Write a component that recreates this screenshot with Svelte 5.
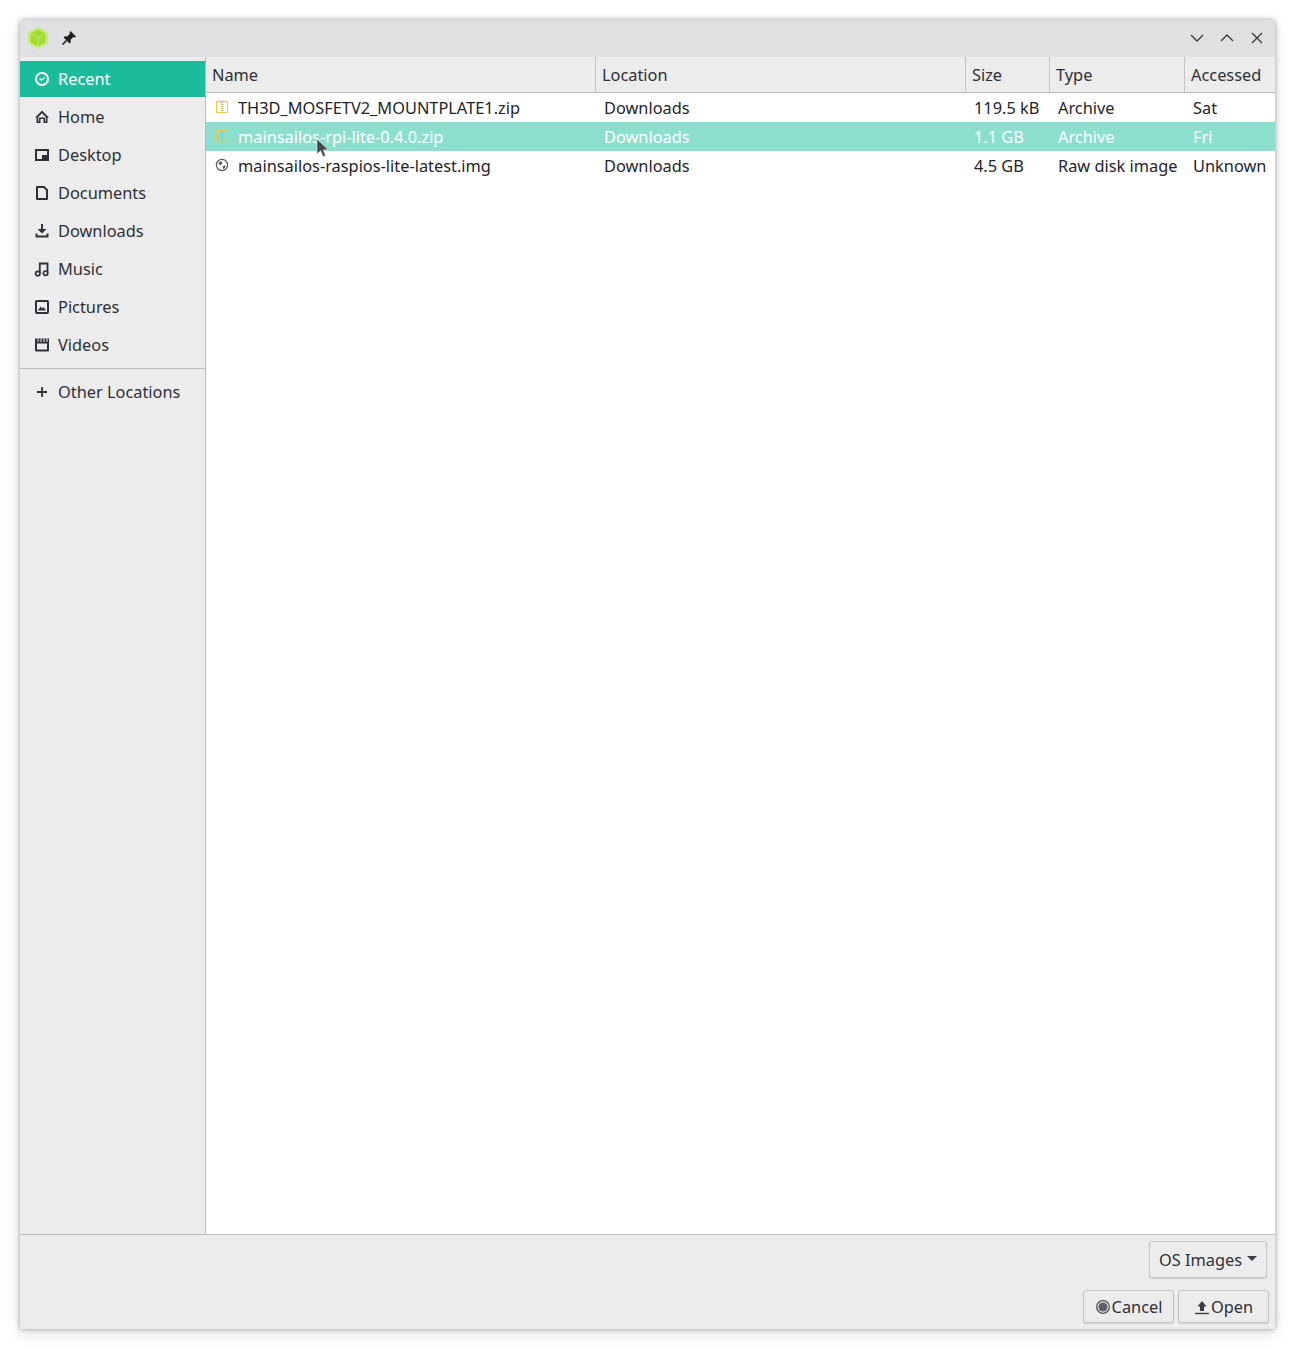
<script>
	const places = [
		{ name: 'Recent', icon: 'recent', active: true },
		{ name: 'Home', icon: 'home' },
		{ name: 'Desktop', icon: 'desktop' },
		{ name: 'Documents', icon: 'documents' },
		{ name: 'Downloads', icon: 'downloads' },
		{ name: 'Music', icon: 'music' },
		{ name: 'Pictures', icon: 'pictures' },
		{ name: 'Videos', icon: 'videos' }
	];

	const files = [
		{ name: 'TH3D_MOSFETV2_MOUNTPLATE1.zip', loc: 'Downloads', size: '119.5 kB', type: 'Archive', when: 'Sat', icon: 'zip' },
		{ name: 'mainsailos-rpi-lite-0.4.0.zip', loc: 'Downloads', size: '1.1 GB', type: 'Archive', when: 'Fri', icon: 'zip', selected: true },
		{ name: 'mainsailos-raspios-lite-latest.img', loc: 'Downloads', size: '4.5 GB', type: 'Raw disk image', when: 'Unknown', icon: 'disk' }
	];
</script>

{#snippet placeIcon(icon)}
	<svg class="picon" viewBox="0 0 16 16" width="16" height="16">
		{#if icon === 'recent'}
			<circle cx="8" cy="8" r="6" fill="none" stroke="currentColor" stroke-width="2" />
			<path d="M5.5 7.5 L7.7 9.2 L10.5 6.5" fill="none" stroke="currentColor" stroke-width="1.2" />
		{:else if icon === 'home'}
			<path fill-rule="evenodd" d="M8 1.5 L15 8.5 L13.5 8.5 L13.5 14 L9.5 14 L9.5 10 L6.5 10 L6.5 14 L2.5 14 L2.5 8.5 L1 8.5 Z M8 4.2 L4.2 8 L4.2 12.4 L5 12.4 L5 8.5 L11 8.5 L11 12.4 L11.8 12.4 L11.8 8 Z" fill="currentColor" />
		{:else if icon === 'desktop'}
			<path fill-rule="evenodd" d="M1 2 H15 V14 H1 Z M3 4 V12 H13 V4 Z M8 8 H13 V12 H8 Z" fill="currentColor" />
		{:else if icon === 'documents'}
			<path d="M3 2 H10 L13 5 V14 H3 Z" fill="none" stroke="currentColor" stroke-width="2" stroke-linejoin="round" />
		{:else if icon === 'downloads'}
			<path d="M7 1 H9 V6 H12.5 L8 10.5 L3.5 6 H7 Z" fill="currentColor" />
			<path d="M2.5 10.5 V13.5 H13.5 V10.5" fill="none" stroke="currentColor" stroke-width="2" stroke-linejoin="round" />
		{:else if icon === 'music'}
			<path d="M5.8 12 V2.5 H13.5 V11.5" fill="none" stroke="currentColor" stroke-width="1.8" />
			<circle cx="3.8" cy="12.6" r="2.2" fill="none" stroke="currentColor" stroke-width="1.7" />
			<circle cx="11.6" cy="12.2" r="2.2" fill="none" stroke="currentColor" stroke-width="1.7" />
		{:else if icon === 'pictures'}
			<rect x="2" y="2" width="12" height="12" rx="1" fill="none" stroke="currentColor" stroke-width="2" />
			<path d="M4 11.5 L6.5 7.5 L8 9.5 L9.5 8 L12 11.5 Z" fill="currentColor" />
		{:else if icon === 'videos'}
			<path fill-rule="evenodd" d="M1 1.5 H15 V13 Q15 14.5 13.5 14.5 H2.5 Q1 14.5 1 13 Z M3 6.5 V12.5 H13 V6.5 Z" fill="currentColor" />
			<path d="M4 1.5 V5 M7 1.5 V5 M10 1.5 V5 M13 1.5 V5" stroke="#ececec" stroke-width="1" />
		{/if}
	</svg>
{/snippet}

<div class="page">
	<div class="window">
		<header class="titlebar">
			<svg class="logo" viewBox="0 0 24 24" width="24" height="24">
				<path d="M12 1 L22 6.5 V17.5 L12 23 L2 17.5 V6.5 Z" fill="#c6ec7e" />
				<path d="M12 3.5 L19.5 7.5 V16.5 L12 20.5 L4.5 16.5 V7.5 Z" fill="#a2dc2e" />
				<path d="M4.5 7.5 L12 12 L19.5 7.5 M12 12 V20.5" fill="none" stroke="#c4e886" stroke-width="1" />
			</svg>
			<svg class="pin" viewBox="0 0 16 16" width="16" height="16">
				<path d="M9.5 1 L15 6.5 L13.8 7.5 L12.4 7 L9.6 9.8 L9.8 12.2 L8.6 13.4 L2.6 7.4 L3.8 6.2 L6.2 6.4 L9 3.6 L8.5 2.2 Z" fill="#1d1f23" />
				<path d="M5.5 10.5 L1.5 14.5" stroke="#1d1f23" stroke-width="1.6" />
			</svg>
			<div class="spacer"></div>
			<div class="controls">
				<svg viewBox="0 0 14 14" width="14" height="14"><path d="M1 4 L7 10 L13 4" /></svg>
				<svg viewBox="0 0 14 14" width="14" height="14"><path d="M1 10 L7 4 L13 10" /></svg>
				<svg viewBox="0 0 14 14" width="14" height="14"><path d="M2 2 L12 12 M12 2 L2 12" /></svg>
			</div>
		</header>

		<div class="main">
			<nav class="sidebar">
				{#each places as p}
					<div class="place" class:active={p.active}>
						{@render placeIcon(p.icon)}
						<span>{p.name}</span>
					</div>
				{/each}
				<div class="sep"></div>
				<div class="place other">
					<svg class="picon" viewBox="0 0 16 16" width="16" height="16">
						<path d="M3 8 H13 M8 3 V13" stroke="currentColor" stroke-width="1.8" />
					</svg>
					<span>Other Locations</span>
				</div>
			</nav>

			<section class="list">
				<div class="cols head">
					<div>Name</div>
					<div>Location</div>
					<div>Size</div>
					<div>Type</div>
					<div>Accessed</div>
				</div>
				{#each files as f}
					<div class="cols row" class:selected={f.selected}>
						<div class="namecell">
							{#if f.icon === 'zip'}
								<svg class="ficon" viewBox="0 0 16 16" width="16" height="16">
									<rect x="2.5" y="2.5" width="11" height="11" fill="none" stroke="#f5c842" stroke-width="1" />
									<path d="M7 3.5 H9 M7 5.5 H9 M7 7.5 H9 M7 9.5 H9 M7 11.5 H9" stroke="#d8b340" stroke-width="1" />
								</svg>
							{:else}
								<svg class="ficon" viewBox="0 0 16 16" width="16" height="16">
									<circle cx="8" cy="8" r="5.6" fill="none" stroke="#55575a" stroke-width="1.2" />
									<path d="M4.5 6 L7 4 L8.5 6.5 L6 8.5 Z M8.5 9.5 L11.5 8 L11 11 L9 12 Z" fill="#55575a" />
								</svg>
							{/if}
							<span>{f.name}</span>
						</div>
						<div class="cell">{f.loc}</div>
						<div class="cell">{f.size}</div>
						<div class="cell">{f.type}</div>
						<div class="cell">{f.when}</div>
					</div>
				{/each}
				<svg class="cursor" viewBox="0 0 14 22" width="14" height="22">
					<path d="M1 1 L1 16 L4.6 12.8 L7 18.5 L9.6 17.4 L7.2 12 L12 11.6 Z" fill="#474747" stroke="#e8e8e8" stroke-width="0.6" />
				</svg>
			</section>
		</div>

		<footer class="footer">
			<div class="filter-row">
				<button class="btn filter">OS Images <i class="caret"></i></button>
			</div>
			<div class="actions">
				<button class="btn action">
					<svg viewBox="0 0 16 16" width="16" height="16">
						<circle cx="8" cy="8" r="6.3" fill="none" stroke="#4d4f53" stroke-width="1.3" />
						<circle cx="8" cy="8" r="4.5" fill="#5d5f63" />
					</svg>
					Cancel
				</button>
				<button class="btn action">
					<svg viewBox="0 0 16 16" width="16" height="16">
						<path d="M8 2 L12.5 7.5 H10 V12 H6 V7.5 H3.5 Z" fill="#3c3e43" />
						<path d="M1 14.5 H15" stroke="#3c3e43" stroke-width="1.4" />
					</svg>
					Open
				</button>
			</div>
		</footer>
	</div>
</div>

<style>
	:global(body) {
		background: #fff;
		font-family: 'Noto Sans', sans-serif;
		font-size: 16.35px;
		color: #2e3038;
	}

	.page {
		padding: 20px 20px 20px 20px;
		height: 1349px;
		box-sizing: border-box;
		overflow: hidden;
	}

	.window {
		width: 1255px;
		height: 1309px;
		display: flex;
		flex-direction: column;
		background: #ececec;
		border-radius: 4px 4px 0 0;
		box-shadow: 0 0 5px rgba(0, 0, 0, 0.35), 0 4px 16px rgba(0, 0, 0, 0.12);
	}

	.titlebar {
		height: 37px;
		flex: none;
		display: flex;
		align-items: center;
		background: #dfe0e2;
		border-radius: 4px 4px 0 0;
		padding: 0 11px 2px 6px;
		box-sizing: border-box;
	}

	.logo {
		margin-right: 11px;
	}

	.spacer {
		flex: 1;
	}

	.controls {
		display: flex;
		gap: 16px;
	}

	.controls svg path {
		fill: none;
		stroke: #35373b;
		stroke-width: 1.3;
	}

	.main {
		flex: 1;
		display: flex;
		min-height: 0;
	}

	.sidebar {
		width: 185px;
		flex: none;
		display: flex;
		flex-direction: column;
		gap: 2px;
		border-right: 1px solid #b9b9b9;
		padding-top: 4px;
	}

	.place {
		height: 36px;
		flex: none;
		display: flex;
		align-items: center;
		gap: 8px;
		padding-left: 14px;
	}

	.place.active {
		background: #1abc9c;
		color: #fff;
	}

	.picon {
		flex: none;
	}

	.sep {
		height: 1px;
		flex: none;
		background: #bdbdbd;
		margin-top: 3px;
	}

	.other {
		margin-top: 3px;
	}

	.list {
		flex: 1;
		background: #fff;
		position: relative;
		min-width: 0;
	}

	.cols {
		display: grid;
		grid-template-columns: 390px 370px 84px 135px 1fr;
	}

	.head {
		height: 36px;
		background: #ececec;
		border-bottom: 1px solid #b9b9b9;
		box-sizing: border-box;
	}

	.head > div {
		display: flex;
		align-items: center;
		padding-left: 6px;
		border-right: 1px solid #c4c4c4;
		box-sizing: border-box;
	}

	.head > div:last-child {
		border-right: none;
	}

	.row {
		height: 29px;
		align-items: center;
		color: #23252b;
	}

	.row.selected {
		background: #8ddfcd;
		color: #fff;
	}

	.namecell {
		display: flex;
		align-items: center;
		gap: 8px;
		padding-left: 8px;
	}

	.ficon {
		flex: none;
		margin-top: -1px;
	}

	.cell {
		padding-left: 8px;
		white-space: nowrap;
	}

	.cursor {
		position: absolute;
		left: 110px;
		top: 81px;
	}

	.footer {
		height: 95px;
		flex: none;
		border-top: 1px solid #bdbdbd;
		box-sizing: border-box;
	}

	.filter-row {
		display: flex;
		justify-content: flex-end;
		padding: 6px 8px 0 0;
	}

	.actions {
		display: flex;
		justify-content: flex-end;
		gap: 4px;
		padding: 12px 6px 0 0;
	}

	.btn {
		font: inherit;
		color: inherit;
		background: #ececec;
		border: 1px solid #c4c4c4;
		border-radius: 3px;
		box-shadow: 0 1px 1px rgba(0, 0, 0, 0.12);
		display: flex;
		align-items: center;
		justify-content: center;
		padding: 0;
	}

	.filter {
		width: 118px;
		height: 37px;
		gap: 5px;
	}

	.action {
		width: 91px;
		height: 33px;
		gap: 1px;
	}

	.caret {
		width: 0;
		height: 0;
		border-left: 5px solid transparent;
		border-right: 5px solid transparent;
		border-top: 5px solid #3c3e43;
		margin-bottom: 3px;
	}
</style>
